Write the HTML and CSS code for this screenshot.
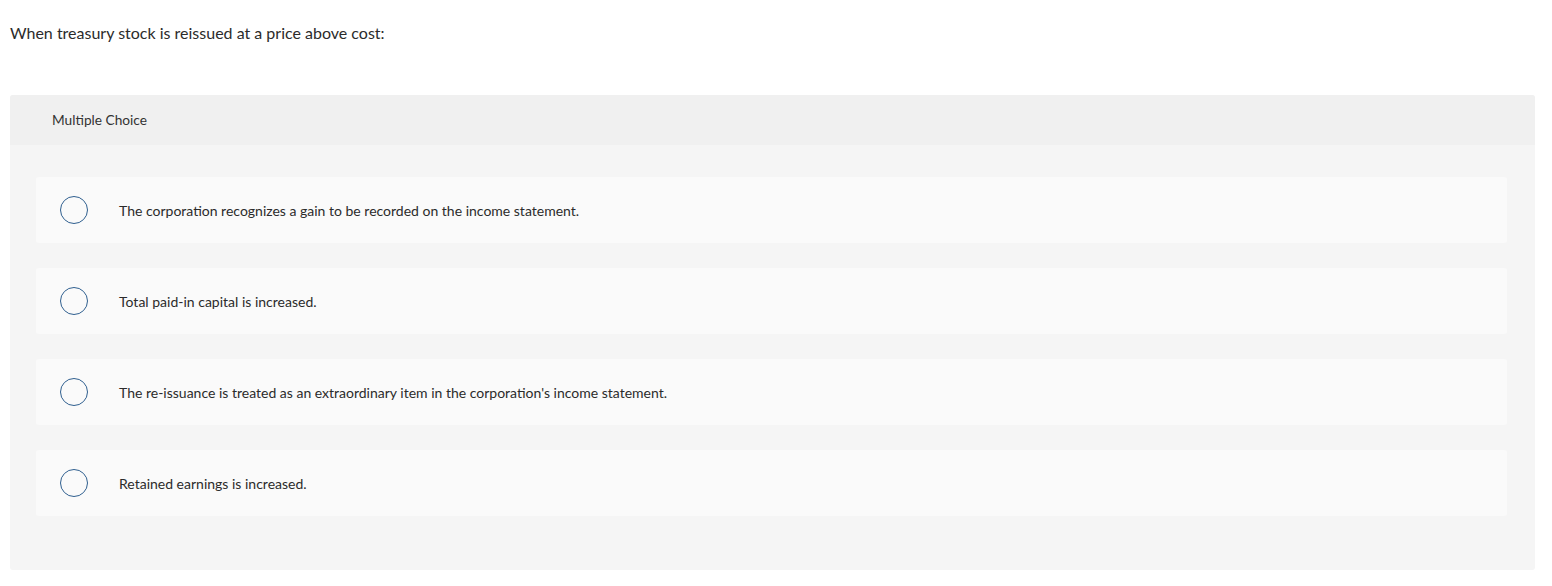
FILE: index.html
```html
<!DOCTYPE html>
<html lang="en">
  <head>
    <meta charset="UTF-8" />
    <title>Multiple Choice</title>
    <link rel="stylesheet" href="styles.css">
  </head>
  <body>
    <div class="question">
      <p class="prompt">When treasury stock is reissued at a price above cost:</p>

      <div class="choice-card">
        <div class="choice-header">Multiple Choice</div>
        <div class="choice-list">
          <label class="choice">
            <span class="radio"></span>
            <span class="choice-text">The corporation recognizes a gain to be recorded on the income statement.</span>
          </label>
          <label class="choice">
            <span class="radio"></span>
            <span class="choice-text">Total paid-in capital is increased.</span>
          </label>
          <label class="choice">
            <span class="radio"></span>
            <span class="choice-text">The re-issuance is treated as an extraordinary item in the corporation's income statement.</span>
          </label>
          <label class="choice">
            <span class="radio"></span>
            <span class="choice-text">Retained earnings is increased.</span>
          </label>
        </div>
      </div>
    </div>
  </body>
</html>
```

FILE: styles.css
```css
body {
  margin: 0;
  background-color: #fff;
  font-family: Lato, "Open Sans", Arial, sans-serif;
  color: #2b2b2b;
}
.question {
  padding: 0 17px 0 10px;
}
.prompt {
  margin: 0;
  padding-top: 23px;
  height: 95px;
  box-sizing: border-box;
  font-size: 16px;
  line-height: 20px;
}
.choice-card {
  background-color: #f5f5f5;
  border-radius: 3px;
  overflow: hidden;
}
.choice-header {
  height: 50px;
  line-height: 50px;
  padding-left: 42px;
  background-color: #f0f0f0;
  font-size: 13.7px;
  color: #333;
}
.choice-list {
  display: flex;
  flex-direction: column;
  gap: 25px;
  padding: 32px 28px 54px 26px;
}
.choice {
  display: flex;
  align-items: center;
  height: 66px;
  padding-left: 24px;
  background-color: #fafafa;
  border-radius: 3px;
  cursor: pointer;
}
.radio {
  width: 26px;
  height: 26px;
  border: 1.5px solid #2f5f8f;
  border-radius: 50%;
  box-sizing: content-box;
  flex-shrink: 0;
  margin-right: 31px;
}
.choice-text {
  font-size: 14px;
  color: #2b2b2b;
}
```
